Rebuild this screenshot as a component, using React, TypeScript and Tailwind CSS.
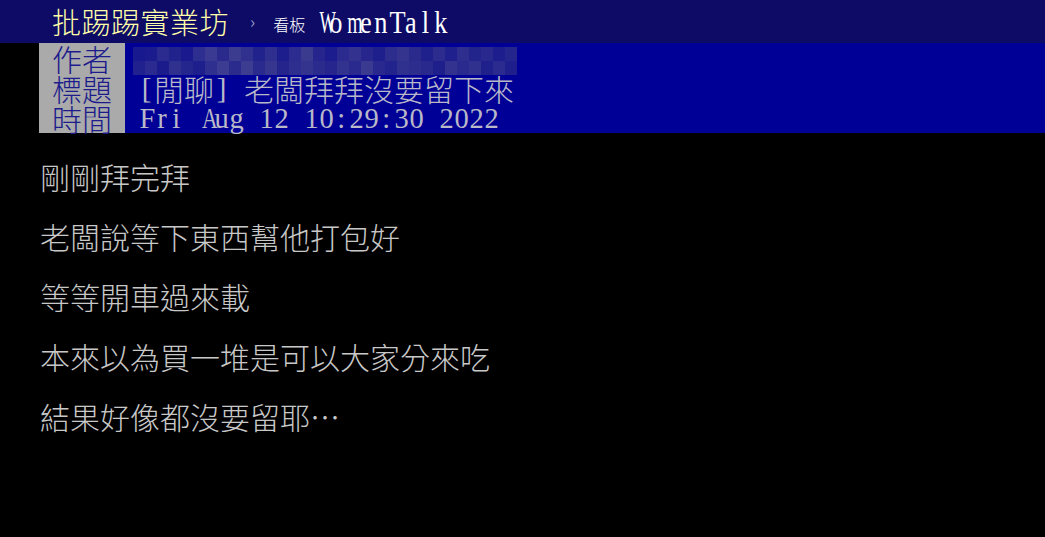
import React from "react";

const CJK = '"Noto Sans CJK TC", "Noto Sans CJK SC", sans-serif';
const SERIF = '"Liberation Serif", "DejaVu Serif", serif';

const WIDE: Record<string, number> = { W: 0.56, m: 0.64, A: 0.72, M: 0.6, T: 0.85 };

function Mono({ text, className = "", scale = 1 }: { text: string; className?: string; scale?: number }) {
  return (
    <span className={"inline-flex " + className}>
      {text.split("").map((c, i) => {
        const s = WIDE[c] !== undefined ? Math.min(WIDE[c], scale) : scale;
        return (
          <span key={i} className="inline-block w-[15px] text-center" style={{ fontFamily: SERIF }}>
            <span className="inline-block" style={s !== 1 ? { transform: `scaleX(${s})` } : undefined}>
              {c === " " ? "\u00a0" : c}
            </span>
          </span>
        );
      })}
    </span>
  );
}

const mosaic = [
  ["#18188f", "#1b1b8d", "#2a2a8f", "#22228c", "#1a1a8e", "#2e2e90", "#3a3a92", "#2a2a8c", "#3b3b90", "#30308e", "#22228d", "#2f2f8f", "#1d1d8d", "#2c2c90", "#3a3a8f", "#25258d", "#1c1c8e", "#2b2b8f", "#33338f", "#26268c", "#1e1e8c", "#2d2d8e", "#34348f", "#2a2a8d", "#20208c", "#2c2c8f", "#1f1f8d", "#2e2e8e", "#23238c", "#28288f", "#1d1d8d", "#25258e"],
  ["#20208e", "#2a2a90", "#1b1b8c", "#30308f", "#25258e", "#1e1e8d", "#2f2f8f", "#3c3c93", "#2b2b8e", "#3c3c91", "#2a2a8e", "#36368f", "#24248c", "#2e2e8f", "#34348f", "#2b2b8e", "#25258d", "#32328f", "#2a2a8e", "#3a3a90", "#28288e", "#23238d", "#30308f", "#2d2d8e", "#28288d", "#1f1f8c", "#33338f", "#29298e", "#30308f", "#20208c", "#2b2b8f", "#1e1e8c"],
];

export default function App() {
  const lines = [
    "剛剛拜完拜",
    "老闆說等下東西幫他打包好",
    "等等開車過來載",
    "本來以為買一堆是可以大家分來吃",
    "結果好像都沒要留耶…",
  ];
  return (
    <div className="w-[1045px] h-[537px] bg-black overflow-hidden">
      {/* top bar */}
      <div className="h-[43px] bg-[#0d0b66] flex items-center pl-[52px]">
        <span className="text-[#ffffa8] text-[29px] leading-none tracking-[0.5px] font-light" style={{ fontFamily: CJK }}>
          批踢踢實業坊
        </span>
        <span className="text-[#9999cc] text-[17px] ml-[21px] mb-[2px]" style={{ fontFamily: CJK }}>
          ›
        </span>
        <span className="text-white text-[16px] ml-[18px] mt-[5px] leading-none font-light" style={{ fontFamily: CJK }}>
          看板
        </span>
        <Mono text="WomenTalk" className="text-white text-[31px] ml-[8px] leading-none mt-[1px]" scale={0.85} />
      </div>

      {/* header */}
      <div className="flex pl-[39px]">
        <div
          className="w-[86px] bg-[#aaaaaa] text-[#1c1c8c] text-[30px] leading-[30px] flex flex-col font-light"
          style={{ fontFamily: CJK }}
        >
          <div className="h-[30px] text-center">作者</div>
          <div className="h-[30px] text-center">標題</div>
          <div className="h-[30px] text-center">時間</div>
        </div>
        <div className="flex-1 bg-[#000096] flex flex-col text-[#b8b8c8]">
          <div className="h-[30px] pl-[8px] pt-[4px]">
            <div className="flex flex-col w-[380px] h-[28px]">
              {mosaic.map((row, r) => (
                <div key={r} className="flex h-[14px]">
                  {row.map((c, i) => (
                    <div key={i} className="h-[14px] w-[12px] flex-none" style={{ backgroundColor: c }} />
                  ))}
                </div>
              ))}
            </div>
          </div>
          <div className="h-[30px] pl-[14px] flex items-center text-[30px] leading-[30px] whitespace-nowrap font-light">
            <Mono text="[" className="text-[29px]" />
            <span style={{ fontFamily: CJK }}>閒聊</span>
            <Mono text="] " className="text-[29px]" />
            <span style={{ fontFamily: CJK }}>老闆拜拜沒要留下來</span>
          </div>
          <div className="h-[30px] pl-[14px] flex items-center leading-[30px]">
            <Mono text="Fri Aug 12 10:29:30 2022" className="text-[30px]" scale={0.95} />
          </div>
        </div>
      </div>

      {/* body */}
      <div className="pl-[40px] pt-[13px] text-[#c8c8c8] text-[30px] leading-[60px] font-light" style={{ fontFamily: CJK }}>
        {lines.map((l, i) => (
          <div key={i} className="h-[60px] whitespace-nowrap">
            {l}
          </div>
        ))}
      </div>
    </div>
  );
}
